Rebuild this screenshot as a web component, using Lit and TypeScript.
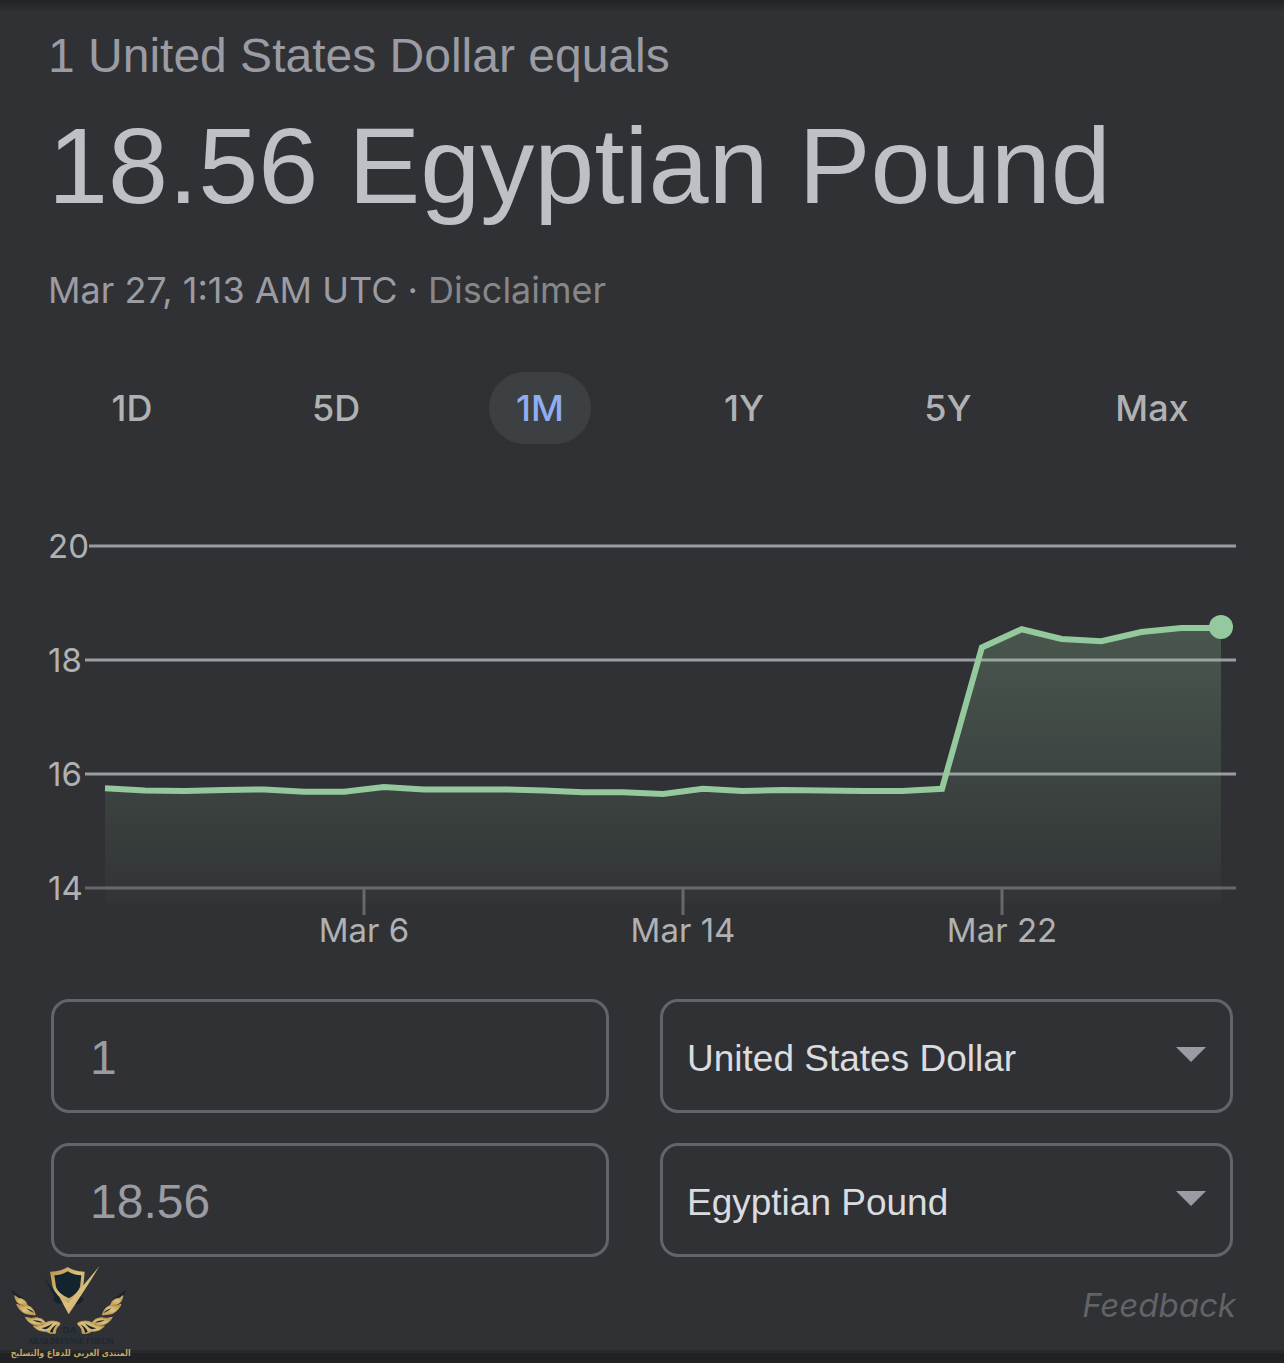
import { LitElement, html, svg, css } from "lit";
import { customElement, state } from "lit/decorators.js";

const RANGES = ["1D", "5D", "1M", "1Y", "5Y", "Max"];
const CURRENCIES = ["United States Dollar", "Egyptian Pound"];

/* Daily closing rates for the month, in Egyptian pounds per dollar. */
const RATES = [
  15.75, 15.71, 15.7, 15.72, 15.73, 15.69, 15.69, 15.77, 15.73, 15.73, 15.73, 15.71, 15.68, 15.68,
  15.65, 15.74, 15.7, 15.72, 15.71, 15.7, 15.7, 15.74, 18.22, 18.54, 18.37, 18.33, 18.49, 18.56, 18.56,
];

const xAt = (day: number) => 57 + (day * 1116) / 28;
const yAt = (rate: number) => 26 + (20 - rate) * 57;

@customElement("rate-chart")
export class RateChart extends LitElement {
  static styles = css`
    :host { display: block; }
    .plot { display: block; width: 100%; height: auto; }
    .label { font-family: Inter, Roboto, sans-serif; font-size: 33px; fill: #b0b1b3; }
    .grid { stroke: #9b9ca3; stroke-width: 3; }
    .axis { stroke: #66676a; stroke-width: 3; }
    .rate { fill: none; stroke: #93c99c; stroke-width: 6; stroke-linejoin: miter; }
    .now { fill: #93c99c; }
  `;

  render() {
    const points = RATES.map((r, i) => `${xAt(i)},${yAt(r)}`).join(" ");
    const levels = [
      { value: 20, start: 41 },
      { value: 18, start: 37 },
      { value: 16, start: 37 },
      { value: 14, start: 37 },
    ];
    const days = [
      { name: "Mar 6", x: 316 },
      { name: "Mar 14", x: 635 },
      { name: "Mar 22", x: 954 },
    ];
    return html`
      <svg class="plot" viewBox="0 0 1188 430" role="img" aria-label="Exchange rate over one month">
        <defs>
          <linearGradient id="fade" gradientUnits="userSpaceOnUse" x1="0" y1="106" x2="0" y2="383">
            <stop offset="0" stop-color="#93c99c" stop-opacity="0.25"></stop>
            <stop offset="1" stop-color="#93c99c" stop-opacity="0.02"></stop>
          </linearGradient>
        </defs>
        ${levels.map(
          (l) => svg`
            <text class="label" x="0" y=${yAt(l.value) + 12}>${l.value}</text>
            <line class=${l.value === 14 ? "axis" : "grid"} x1=${l.start} x2="1188" y1=${yAt(l.value)} y2=${yAt(l.value)}></line>`,
        )}
        ${days.map(
          (d) => svg`
            <line class="axis" x1=${d.x} x2=${d.x} y1="369" y2="395"></line>
            <text class="label" x=${d.x} y="422" text-anchor="middle">${d.name}</text>`,
        )}
        <polygon fill="url(#fade)" points="57,383 ${points} 1173,383"></polygon>
        <polyline class="rate" points=${points}></polyline>
        <circle class="now" cx="1173" cy="107" r="12"></circle>
      </svg>
    `;
  }
}

@customElement("forum-mark")
export class ForumMark extends LitElement {
  static styles = css`
    :host { display: block; width: 122px; }
    .mark { display: block; width: 100%; height: auto; overflow: visible; }
    .navy { fill: #14242e; }
    .gold { fill: url(#gold); }
    .feather { fill: url(#gold); stroke: #c2a05a; stroke-width: 3; stroke-linejoin: round; }
    .name { font: bold 22px "Liberation Serif", serif; fill: #182833; }
    .initials { font: bold 28px "Liberation Sans", sans-serif; fill: #182833; }
    .arabic { font: bold 26px "DejaVu Sans Condensed", "DejaVu Sans", sans-serif; fill: #c9a85f; }
  `;

  render() {
    const wing = svg`
      <path class="navy" d="M35 102 Q54 124 74 130 Q66 136 50 130 Q38 120 35 102Z"></path>
      <path class="feather" d="M44 122 Q56 133 66 132 Q78 136 82 152 Q62 151 52 142 Q46 133 44 122Z"></path>
      <path class="feather" d="M50 148 Q68 156 82 152 Q100 156 106 180 Q92 178 78 176 Q60 170 50 148Z"></path>
      <path class="navy" d="M78 160 Q94 163 102 174 Q88 168 78 160Z"></path>
      <path class="feather" d="M76 187 Q94 193 110 188 Q130 190 138 204 Q126 206 118 211 Q90 212 76 187Z"></path>
      <path class="navy" d="M98 196 Q116 195 128 202 Q112 204 98 196Z"></path>
      <path class="feather" d="M100 213 Q122 216 136 204 Q154 193 179 203 Q182 209 174 214 Q166 220 166 235 Q148 237 138 229 Q112 229 100 213Z"></path>
      <path class="navy" d="M124 220 Q146 214 158 205 Q150 219 136 223Z"></path>
      <path class="navy" d="M150 231 Q155 216 172 208 Q160 219 158 233Z"></path>`;
    return html`
      <svg class="mark" viewBox="30 24 366 300" role="img" aria-label="Arab Defense Forum">
        <defs>
          <linearGradient id="gold" x1="0" y1="0" x2="1" y2="1">
            <stop offset="0" stop-color="#b48f45"></stop>
            <stop offset="0.5" stop-color="#dcc07f"></stop>
            <stop offset="1" stop-color="#b9964e"></stop>
          </linearGradient>
        </defs>
        ${wing}
        <g transform="translate(413 0) scale(-1 1)">${wing}</g>
        <path class="navy" d="M131 66 L160 104 L194 146 L170 144 L158 134 L164 126Z"></path>
        <path class="navy" d="M240 122 L252 132 L238 148 L220 148Z"></path>
        <path class="gold" d="M203 36 Q224 50 254 50 L250 96 Q242 122 207 143 Q166 124 158 96 L150 50 Q182 50 203 36Z"></path>
        <path class="navy" d="M203 49 Q222 61 244 61 L240 96 Q232 116 207 130 Q174 116 168 96 L163 61 Q184 61 203 49Z"></path>
        <path class="gold" d="M176 122 L206 143 L298 34 Q262 94 206 178Z"></path>
        <text class="initials" x="208" y="235" text-anchor="middle">DA</text>
        <text class="name" x="212" y="266" text-anchor="middle">ARAB DEFENSE FORUM</text>
        <text class="arabic" x="212" y="304" text-anchor="middle" direction="rtl">المنتدى العربي للدفاع والتسليح</text>
      </svg>
    `;
  }
}

@customElement("app-root")
export class AppRoot extends LitElement {
  static styles = css`
    :host {
      display: block;
      min-height: 100vh;
      background: #202124;
      font-family: Inter, Roboto, sans-serif;
      color: #9b9ca3;
    }
    * { box-sizing: border-box; }
    .card {
      position: relative;
      padding: 24px 0 24px;
      background: linear-gradient(#222326, #303134 12px);
      border-bottom: 3px solid #28292c;
    }
    .summary { padding: 0 48px; }
    .base, .result { margin: 0; font-family: "Liberation Sans", Arial, sans-serif; font-weight: 400; }
    .base { font-size: 48px; line-height: 64px; }
    .result { margin-top: 14px; font-size: 108px; line-height: 128px; color: #bdc1c6; }
    .stamp { margin: 36px 0 0; font-size: 36px; line-height: 48px; }
    .disclaimer { color: #87878a; text-decoration: none; }
    .ranges {
      display: grid;
      grid-template-columns: repeat(6, 1fr);
      justify-items: center;
      margin-top: 58px;
      padding: 0 30px;
    }
    .range {
      min-width: 102px;
      height: 72px;
      padding: 0 15px;
      border: 0;
      border-radius: 36px;
      background: none;
      color: #b0b1b3;
      font: 500 36px Inter, Roboto, sans-serif;
    }
    .range.active { background: #3c4043; color: #8fadf0; }
    .chart { margin: 76px 48px 0; }
    .converter {
      display: grid;
      grid-template-columns: 558fr 573fr;
      gap: 30px 51px;
      margin-top: 49px;
      padding: 0 51px;
    }
    .field {
      width: 100%;
      min-width: 0;
      height: 114px;
      border: 3px solid #616468;
      border-radius: 18px;
      background: transparent;
      font-family: "Liberation Sans", Arial, sans-serif;
    }
    .amount { padding: 2px 36px 0; font-size: 48px; color: #9b9ca3; }
    .picker { display: grid; align-items: center; }
    .picker > * { grid-area: 1 / 1; }
    .currency { appearance: none; padding: 4px 72px 0 24px; font-size: 37px; color: #dadce0; }
    .arrow { justify-self: end; width: 30px; height: 15px; margin: 0 27px 4px 0; pointer-events: none; fill: #9b9ca3; }
    .footer { display: flex; justify-content: flex-end; margin-top: 27px; padding: 0 48px; }
    .feedback { font-size: 33px; line-height: 42px; font-style: italic; color: #626366; text-decoration: none; }
    .mark { position: absolute; left: 10px; bottom: -13px; }
  `;

  @state() private range = "1M";

  render() {
    return html`
      <main class="card">
        <header class="summary">
          <p class="base">1 United States Dollar equals</p>
          <h1 class="result">18.56 Egyptian Pound</h1>
          <p class="stamp">Mar 27, 1:13 AM UTC · <a class="disclaimer" href="#disclaimer">Disclaimer</a></p>
        </header>
        <nav class="ranges" aria-label="Time range">
          ${RANGES.map(
            (r) => html`<button
              class="range ${r === this.range ? "active" : ""}"
              aria-pressed=${r === this.range}
              @click=${() => (this.range = r)}
            >${r}</button>`,
          )}
        </nav>
        <rate-chart class="chart"></rate-chart>
        <form class="converter">
          ${["1", "18.56"].map(
            (amount, row) => html`
              <input class="field amount" type="text" inputmode="decimal" aria-label="${CURRENCIES[row]} amount" .value=${amount} />
              <div class="picker">
                <select class="field currency" aria-label="Currency ${row + 1}">
                  ${CURRENCIES.map((c, i) => html`<option ?selected=${i === row}>${c}</option>`)}
                </select>
                <svg class="arrow" viewBox="0 0 30 15" aria-hidden="true"><path d="M0 0H30L15 15Z"></path></svg>
              </div>
            `,
          )}
        </form>
        <footer class="footer"><a class="feedback" href="#feedback">Feedback</a></footer>
        <forum-mark class="mark"></forum-mark>
      </main>
    `;
  }
}
